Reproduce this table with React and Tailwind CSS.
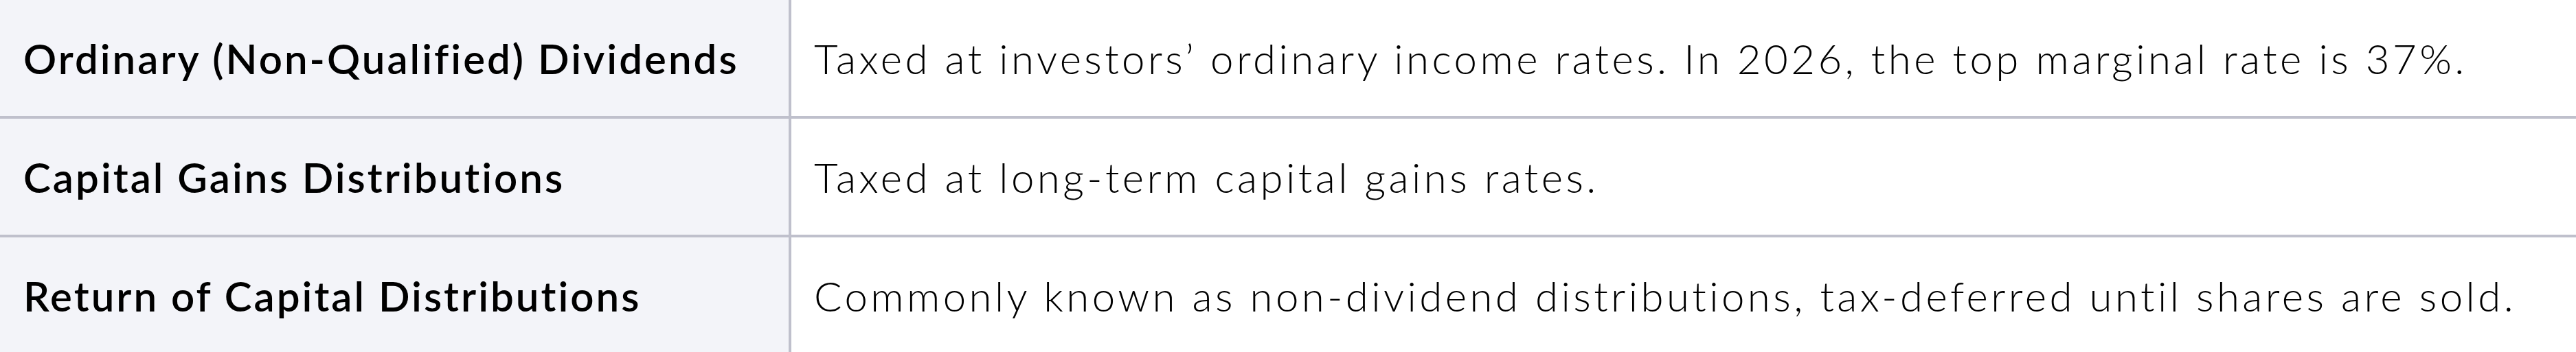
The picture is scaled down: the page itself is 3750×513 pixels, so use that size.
import React from "react";

const rows = [
  {
    label: "Ordinary (Non-Qualified) Dividends",
    text: "Taxed at investors’ ordinary income rates. In 2026, the top marginal rate is 37%.",
  },
  {
    label: "Capital Gains Distributions",
    text: "Taxed at long-term capital gains rates.",
  },
  {
    label: "Return of Capital Distributions",
    text: "Commonly known as non-dividend distributions, tax-deferred until shares are sold.",
  },
];

export default function App() {
  return (
    <div className="w-[3750px] h-[513px] overflow-hidden bg-white text-black">
      {rows.map((row) => (
        <div key={row.label} className="flex h-[173px] border-b-4 border-[#bfc0cc]">
          {/* label column */}
          <div className="w-[1152px] shrink-0 flex items-center px-[34px] bg-[#f3f4f9] border-r-4 border-[#bfc0cc]">
            <span className="font-['Lato',sans-serif] font-semibold text-[60px] leading-none tracking-[3px] [font-variant-ligatures:none]">
              {row.label}
            </span>
          </div>
          {/* description */}
          <div className="flex-1 flex items-center px-[33px]">
            <span className="font-['Lato',sans-serif] font-light text-[60px] leading-none tracking-[4.4px] [font-variant-ligatures:none]">
              {row.text}
            </span>
          </div>
        </div>
      ))}
    </div>
  );
}
